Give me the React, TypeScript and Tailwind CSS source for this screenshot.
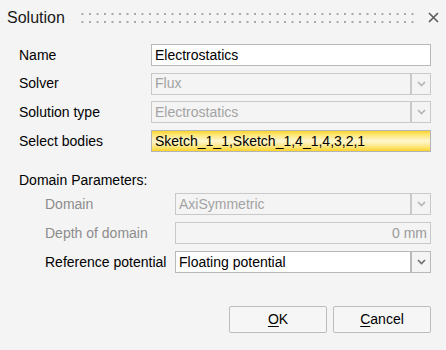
import React from 'react'

const FONT = { fontFamily: '"Liberation Sans", Arial, sans-serif' }

function Chevron({ enabled }: { enabled: boolean }) {
  return (
    <svg width="9" height="6" viewBox="0 0 9 6">
      <path
        d="M1 1 L4.5 4.5 L8 1"
        fill="none"
        stroke={enabled ? '#6f6f6f' : '#b4b4b4'}
        strokeWidth="1.6"
      />
    </svg>
  )
}

function Combo({
  value,
  enabled = false,
}: {
  value: string
  enabled?: boolean
}) {
  return (
    <div className="flex h-[22px] flex-1">
      <div
        className={[
          'flex flex-1 items-center border px-[3px] text-[14px]',
          enabled
            ? 'border-[#b9b9b9] bg-white text-black'
            : 'border-[#c9c9c9] bg-[#f4f4f4] text-[#a3a3a3]',
        ].join(' ')}
      >
        {value}
      </div>
      <div
        className={[
          'flex w-[20px] items-center justify-center border bg-[#f4f4f4]',
          enabled ? 'border-[#b9b9b9]' : 'border-[#c9c9c9]',
        ].join(' ')}
      >
        <Chevron enabled={enabled} />
      </div>
    </div>
  )
}

function Row({
  label,
  muted,
  children,
  labelWidth,
  className,
}: {
  label: string
  muted?: boolean
  children: React.ReactNode
  labelWidth: string
  className?: string
}) {
  return (
    <div className={['flex h-[22px] items-center', className].join(' ')}>
      <span
        className={[
          'shrink-0 text-[14px]',
          labelWidth,
          muted ? 'text-[#8c8c8c]' : 'text-black',
        ].join(' ')}
      >
        {label}
      </span>
      {children}
    </div>
  )
}

function GripDots() {
  const dots = Array.from({ length: 45 }, (_, i) => 0.5 + i * 7.5)
  return (
    <svg width="334" height="10" viewBox="0 0 334 10" className="shrink-0">
      {dots.map((x) => (
        <g key={x} fill="#a9a9a9">
          <rect x={x} y={0} width="2" height="2" />
          <rect x={x} y={8} width="2" height="2" />
        </g>
      ))}
    </svg>
  )
}

export default function App() {
  return (
    <div className="h-[350px] w-[446px] bg-[#f4f4f4]" style={FONT}>
      {/* Title bar */}
      <div className="flex h-[35px] items-center pl-[7px]">
        <span className="w-[74px] text-[16px] text-[#1a1a1a]">Solution</span>
        <div className="mt-[1px]">
          <GripDots />
        </div>
        <svg width="11" height="11" viewBox="0 0 11 11" className="ml-[13px]">
          <path d="M1 1 L10 10 M10 1 L1 10" stroke="#5a5a5a" strokeWidth="1.6" />
        </svg>
      </div>

      {/* Main fields */}
      <div className="flex flex-col pl-[19px] pr-[15px] pt-[9px]">
        <Row label="Name" labelWidth="w-[132px]">
          <div className="flex h-[22px] flex-1 items-center border border-[#b9b9b9] bg-white px-[3px] text-[14px] text-black">
            Electrostatics
          </div>
        </Row>
        <Row label="Solver" labelWidth="w-[132px]" className="mt-[6.5px]">
          <Combo value="Flux" />
        </Row>
        <Row label="Solution type" labelWidth="w-[132px]" className="mt-[6.5px]">
          <Combo value="Electrostatics" />
        </Row>
        <Row label="Select bodies" labelWidth="w-[132px]" className="mt-[7px]">
          <div className="flex h-[22px] flex-1 items-center border border-[#b4b4b4] bg-[linear-gradient(to_bottom,#ffd52e_0%,#ffe77a_20%,#fff6cf_50%,#ffe98a_75%,#ffd42a_100%)] px-[3px] text-[14px] text-black">
            Sketch_1_1,Sketch_1,4_1,4,3,2,1
          </div>
        </Row>

        <div className="mt-[18px] text-[14px] text-black">Domain Parameters:</div>

        <div className="mt-[2px] flex flex-col pl-[26px]">
          <Row label="Domain" muted labelWidth="w-[130px]">
            <Combo value="AxiSymmetric" />
          </Row>
          <Row label="Depth of domain" muted labelWidth="w-[130px]" className="mt-[7px]">
            <div className="flex h-[22px] flex-1 items-center justify-end border border-[#c9c9c9] px-[3px] text-[14px] text-[#9a9a9a]">
              0 mm
            </div>
          </Row>
          <Row label="Reference potential" labelWidth="w-[130px]" className="mt-[7px]">
            <Combo value="Floating potential" enabled />
          </Row>
        </div>

        {/* Buttons */}
        <div className="mt-[33px] flex justify-end gap-[6px]">
          <button className="h-[27px] w-[98px] rounded-[2px] border border-[#bcbcbc] bg-[#f6f6f6] text-[14px] text-black">
            <span className="underline underline-offset-2">O</span>K
          </button>
          <button className="h-[27px] w-[98px] rounded-[2px] border border-[#bcbcbc] bg-[#f6f6f6] text-[14px] text-black">
            <span className="underline underline-offset-2">C</span>ancel
          </button>
        </div>
      </div>
    </div>
  )
}
